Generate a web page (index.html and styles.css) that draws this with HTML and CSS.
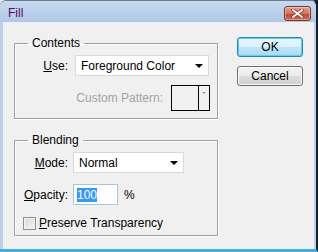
FILE: index.html
```html
<!DOCTYPE html>
<html lang="en">
<head>
    <meta charset="UTF-8">
    <title>Fill</title>
    <link rel="stylesheet" href="styles.css">
</head>
<body>
    <div class="window">
        <div class="titlebar">
            <span class="title">Fill</span>
            <button class="close" type="button">
                <svg width="13" height="9" viewBox="0 0 13 9">
                    <path d="M2 1 L11 8 M11 1 L2 8" stroke="#7a2c20" stroke-width="3.4" stroke-linecap="round"/>
                    <path d="M2 1 L11 8 M11 1 L2 8" stroke="#fff" stroke-width="2" stroke-linecap="round"/>
                </svg>
            </button>
        </div>
        <div class="client">
            <div class="groups">
                <fieldset class="group contents">
                    <legend>Contents</legend>
                    <div class="row">
                        <label class="lbl"><u>U</u>se:</label>
                        <div class="select use">Foreground Color<span class="arrow"></span></div>
                    </div>
                    <div class="row pattern-row">
                        <label class="disabled">Custom Pattern:</label>
                        <div class="pattern">
                            <span class="swatch"></span>
                            <span class="pick"><span class="arrow small"></span></span>
                        </div>
                    </div>
                </fieldset>

                <fieldset class="group blending">
                    <legend>Blending</legend>
                    <div class="row">
                        <label class="lbl"><u>M</u>ode:</label>
                        <div class="select mode">Normal<span class="arrow"></span></div>
                    </div>
                    <div class="row">
                        <label class="lbl"><u>O</u>pacity:</label>
                        <div class="field"><span class="sel">100</span></div>
                        <span class="pct">%</span>
                    </div>
                    <div class="row check-row">
                        <span class="checkbox"></span>
                        <label><u>P</u>reserve Transparency</label>
                    </div>
                </fieldset>
            </div>

            <div class="buttons">
                <button class="btn default" type="button">OK</button>
                <button class="btn" type="button">Cancel</button>
            </div>
        </div>
    </div>
</body>
</html>
```

FILE: styles.css
```css
* {
    box-sizing: border-box;
}
body {
    margin: 0;
    background: linear-gradient(90deg, #e4e4e4 50%, #1e1e1e 50%);
    font-family: "Liberation Sans", Arial, sans-serif;
    font-size: 12px;
    color: #000;
}
.window {
    width: 318px;
    height: 252px;
    background: #b9d1ea;
    border-top: 1px solid #6d7c8c;
    border-right: 2px solid #1e1e1e;
    border-radius: 6px 6px 0 0;
    border-bottom: 3px solid #3fb1de;
    display: flex;
    flex-direction: column;
}
.titlebar {
    height: 21px;
    display: flex;
    align-items: center;
    justify-content: space-between;
    padding: 0 5px 0 8px;
    background: linear-gradient(#c6daf0, #aec8e6);
    border-radius: 6px 6px 0 0;
}
.title {
    color: #5c0a5c;
    font-size: 12px;
    margin-top: 2px;
}
.close {
    width: 27px;
    height: 15px;
    margin-top: 3px;
    border: 1px solid #7b3628;
    border-radius: 3px;
    background: linear-gradient(#e9a392, #d4725c 50%, #c1482f 51%, #d06a4f);
    box-shadow: inset 0 0 0 1px rgba(255, 255, 255, 0.35);
    display: flex;
    align-items: center;
    justify-content: center;
    padding: 0;
}
.client {
    flex: 1;
    margin: 0 2px 0 3px;
    background: #f0f0f0;
    display: flex;
    padding: 14px 0 0 11px;
}
.groups {
    width: 204px;
}
.group {
    margin: 0;
    border: 1px solid #a0a0a0;
    box-shadow: 1px 1px 0 #fff, inset 1px 1px 0 #fff;
    padding: 5px 7px 7px 0;
}
.group legend {
    margin-left: 13px;
    padding: 0 4px;
    line-height: 14px;
}
.blending {
    margin-top: 14px;
    padding-bottom: 5px;
}
.row {
    display: flex;
    align-items: center;
    gap: 5px;
}
.row + .row {
    margin-top: 9px;
}
.blending .row + .row {
    margin-top: 11px;
}
.lbl {
    width: 53px;
    text-align: right;
}
.select {
    position: relative;
    height: 21px;
    background: #fff;
    border: 1px solid #d9d9d9;
    display: flex;
    align-items: center;
    padding-left: 5px;
}
.select.use {
    width: 134px;
    margin-left: 2px;
}
.select.mode {
    width: 111px;
}
.arrow {
    position: absolute;
    right: 5px;
    top: 8px;
    border-left: 4px solid transparent;
    border-right: 4px solid transparent;
    border-top: 4px solid #000;
}
.arrow.small {
    position: static;
    border-left-width: 2px;
    border-right-width: 2px;
    border-top: 2px solid #a0a0a0;
}
.pattern-row {
    justify-content: flex-end;
    gap: 8px;
}
.disabled {
    color: #a3a3a3;
}
.pattern {
    width: 39px;
    height: 26px;
    border: 1px solid #000;
    display: flex;
}
.swatch {
    flex: 1;
    border-right: 1px solid #000;
}
.pick {
    width: 10px;
    display: flex;
    justify-content: center;
    padding-top: 6px;
}
.field {
    width: 45px;
    height: 21px;
    background: #fff;
    border: 1px solid #a6c5e4;
    display: flex;
    align-items: center;
    padding-left: 3px;
}
.sel {
    background: #3399ff;
    color: #fff;
    line-height: 14px;
}
.pct {
    margin-left: 1px;
}
.check-row {
    padding-left: 8px;
    gap: 3px;
}
.checkbox {
    width: 13px;
    height: 13px;
    border: 1px solid #8e8f8f;
    background: linear-gradient(135deg, #d8d8d8, #f6f6f6);
    box-shadow: inset 0 0 0 1px #f4f4f4;
}
.buttons {
    margin-left: 19px;
    display: flex;
    flex-direction: column;
    gap: 9px;
    padding-top: 1px;
}
.btn {
    width: 66px;
    height: 20px;
    font-family: inherit;
    font-size: 12px;
    border: 1px solid #707070;
    border-radius: 3px;
    background: linear-gradient(#f2f2f2 0%, #ebebeb 50%, #dddddd 51%, #cfcfcf 100%);
    box-shadow: inset 0 0 0 1px #fbfbfb;
    padding: 0;
}
.btn.default {
    border-color: #3c7fb1;
    background: linear-gradient(#eaf6fd 0%, #d9f0fc 50%, #bee6fd 51%, #a7d9f5 100%);
    box-shadow: inset 0 0 0 1px #48d6f9;
}
```
